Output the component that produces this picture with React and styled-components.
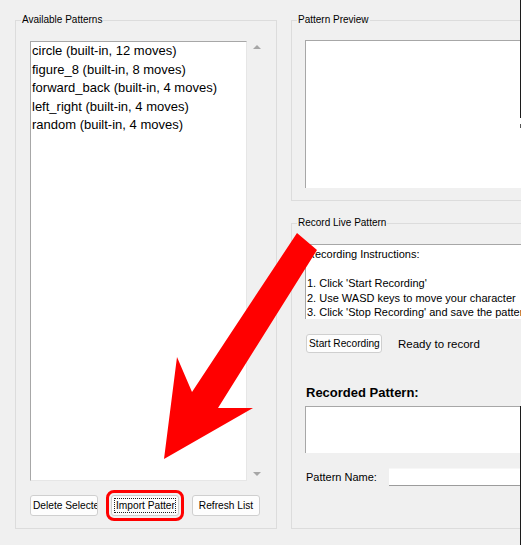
import React from "react";
import styled, { createGlobalStyle } from "styled-components";

const GlobalStyle = createGlobalStyle`
  html, body { margin: 0; padding: 0; background: #f0f0f0; overflow: hidden; }
  body { font-family: "Liberation Sans", Arial, sans-serif; color: #000; }
  * { box-sizing: border-box; }
`;

const Window = styled.div`
  position: relative;
  width: 521px;
  height: 545px;
  overflow: hidden;
  background: #f0f0f0;
  display: grid;
  grid-template-columns: 262px 262px;
  column-gap: 14px;
  padding: 20px 0 16px 15px;
`;

const Group = styled.section`
  position: relative;
  border: 1px solid #dcdcdc;
  padding: ${(p) => p.$pad};
  display: flex;
  flex-direction: column;
  min-height: 0;
  ${(p) => (p.$height ? `height: ${p.$height}px; flex: none;` : "flex: 1;")}
`;

const Legend = styled.span`
  position: absolute;
  top: -7px;
  left: 5px;
  padding: 0 1px;
  background: #f0f0f0;
  font-size: 10px;
  line-height: 12px;
  white-space: nowrap;
`;

const RightColumn = styled.div`
  display: flex;
  flex-direction: column;
  gap: 22px;
  min-height: 0;
`;

const ListFrame = styled.div`
  display: flex;
  height: 440px;
`;

const ListBox = styled.ul`
  margin: 0;
  padding: 0 0 0 1px;
  list-style: none;
  width: 217px;
  background: #fff;
  border: 1px solid;
  border-color: #a7a7a7 #e6e6e6 #e6e6e6 #a7a7a7;
  font-size: 13px;
  line-height: 18.5px;
`;

const ListItem = styled.li`
  white-space: nowrap;
`;

const ScrollBar = styled.div`
  width: 20px;
  display: flex;
  flex-direction: column;
  justify-content: space-between;
  align-items: center;
  padding: 4px 0 5px;
`;

const Arrow = styled.span`
  width: 0;
  height: 0;
  border-left: 4px solid transparent;
  border-right: 4px solid transparent;
  ${(p) =>
    p.$down
      ? "border-top: 4px solid #a6a6a6;"
      : "border-bottom: 4px solid #a6a6a6;"}
`;

const ButtonRow = styled.div`
  display: flex;
  gap: 13px;
  margin-top: 14px;
`;

const Button = styled.button`
  width: ${(p) => p.$w}px;
  height: ${(p) => p.$h}px;
  padding: ${(p) => (p.$focus ? "2px" : "0 2px")};
  background: #fdfdfd;
  border: 1px solid #cfcfcf;
  border-radius: 3px;
  font-family: "Liberation Sans", Arial, sans-serif;
  font-size: 10.2px;
  color: #000;
  display: flex;
  align-items: center;
  justify-content: safe center;
  overflow: hidden;
  white-space: nowrap;
  flex: none;
  ${(p) => (p.$highlight ? "outline: 3px solid #ff0000; outline-offset: 2px;" : "")}
`;

const FocusRing = styled.span`
  flex: 1;
  align-self: stretch;
  border: 1px dotted #222;
  display: flex;
  align-items: center;
  justify-content: safe center;
  overflow: hidden;
  padding: 0 1px;
`;

const WhiteBox = styled.div`
  height: ${(p) => p.$h}px;
  margin-top: ${(p) => p.$mt || 0}px;
  background: #fff;
  border-top: 1px solid #a7a7a7;
  border-left: 1px solid #a7a7a7;
  flex: none;
`;

const Instructions = styled.div`
  height: 75px;
  background: #fff;
  border-top: 1px solid #a7a7a7;
  border-left: 1px solid #a7a7a7;
  padding: 2px 0 0 1px;
  font-size: 11px;
  line-height: 14.5px;
  white-space: pre;
  overflow: hidden;
`;

const RecordRow = styled.div`
  display: flex;
  align-items: center;
  gap: 16px;
  margin-top: 15px;
  padding-left: 1px;
`;

const Status = styled.span`
  font-size: 11.5px;
`;

const Heading = styled.div`
  margin-top: 31px;
  padding-left: 1px;
  font-size: 13px;
  font-weight: bold;
  line-height: 18px;
`;

const NameRow = styled.div`
  display: flex;
  align-items: center;
  margin-top: 15px;
`;

const NameLabel = styled.span`
  width: 84px;
  padding-left: 1px;
  font-size: 11px;
  flex: none;
`;

const Entry = styled.div`
  flex: 1;
  height: 18px;
  background: #fff;
  border-bottom: 1px solid #9c9c9c;
  border-top: 1px solid #f7f7f7;
`;

const Annotation = styled.svg`
  position: absolute;
  inset: 0;
  pointer-events: none;
`;

const EdgeLine = styled.div`
  position: absolute;
  right: 0;
  top: 0;
  width: 1px;
  height: 545px;
  background: linear-gradient(
    to bottom,
    #1c1c1c 0,
    #1c1c1c 118px,
    transparent 118px,
    transparent 124px,
    #555 124px,
    #555 128px,
    transparent 128px,
    transparent 406px,
    #1c1c1c 406px,
    #1c1c1c 545px
  );
`;

const patterns = [
  "circle (built-in, 12 moves)",
  "figure_8 (built-in, 8 moves)",
  "forward_back (built-in, 4 moves)",
  "left_right (built-in, 4 moves)",
  "random (built-in, 4 moves)",
];

const instructions = `Recording Instructions:

1. Click 'Start Recording'
2. Use WASD keys to move your character
3. Click 'Stop Recording' and save the pattern`;

export default function App() {
  return (
    <>
      <GlobalStyle />
      <Window>
        <Group $pad="20px 8px 11px 14px">
          <Legend>Available Patterns</Legend>
          <ListFrame>
            <ListBox>
              {patterns.map((p) => (
                <ListItem key={p}>{p}</ListItem>
              ))}
            </ListBox>
            <ScrollBar>
              <Arrow />
              <Arrow $down />
            </ScrollBar>
          </ListFrame>
          <ButtonRow>
            <Button $w={68} $h={21}>Delete Selected</Button>
            <Button $w={68} $h={21} $focus $highlight>
              <FocusRing>Import Pattern</FocusRing>
            </Button>
            <Button $w={68} $h={21}>Refresh List</Button>
          </ButtonRow>
        </Group>
        <RightColumn>
          <Group $height={181} $pad="19px 0 0 13px">
            <Legend>Pattern Preview</Legend>
            <WhiteBox $h={148} />
          </Group>
          <Group $pad="20px 0 0 13px">
            <Legend>Record Live Pattern</Legend>
            <Instructions>{instructions}</Instructions>
            <RecordRow>
              <Button $w={76} $h={19}>Start Recording</Button>
              <Status>Ready to record</Status>
            </RecordRow>
            <Heading>Recorded Pattern:</Heading>
            <WhiteBox $h={47} $mt={4} />
            <NameRow>
              <NameLabel>Pattern Name:</NameLabel>
              <Entry />
            </NameRow>
          </Group>
        </RightColumn>
        <Annotation width="521" height="545" viewBox="0 0 521 545">
          <polygon
            points="297,233 317,250 218,408 253,408 164,459 177,357 192,392"
            fill="#ff0000"
          />
        </Annotation>
        <EdgeLine />
      </Window>
    </>
  );
}
